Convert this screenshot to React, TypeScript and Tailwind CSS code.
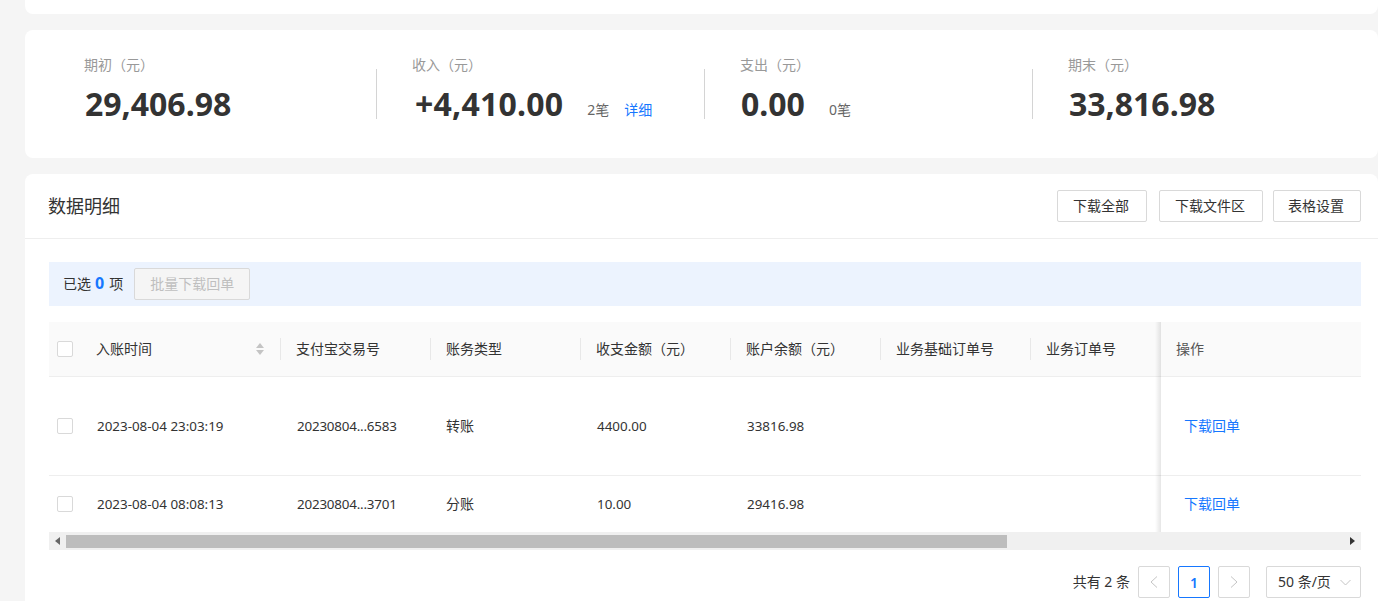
const rows = [
  { time: "2023-08-04 23:03:19", no: "20230804...6583", type: "转账", amount: "4400.00", balance: "33816.98", height: "h-[99px] border-b border-[#eeeeee]" },
  { time: "2023-08-04 08:08:13", no: "20230804...3701", type: "分账", amount: "10.00", balance: "29416.98", height: "h-[56px]" },
];

const columns = ["支付宝交易号", "账务类型", "收支金额（元）", "账户余额（元）", "业务基础订单号", "业务订单号"];

const gridClass = "grid grid-cols-[48px_184px_150px_150px_150px_150px_150px_150px]";

function Checkbox() {
  return (
    <div className="flex h-full items-center pl-2">
      <div className="h-4 w-4 rounded-[2px] border border-[#d9d9d9] bg-white" />
    </div>
  );
}

function Stat({ label, value, count, detail }: { label: string; value: string; count?: string; detail?: boolean }) {
  return (
    <div className="flex w-[328px] shrink-0">
      <div className="mt-[15px] h-[50px] w-px bg-[#d4d4d4]" />
      <div className="pl-9">
        <div className="-ml-px text-[14px] leading-[22px] text-[#999999]">{label}</div>
        <div className="mt-[6px] flex items-baseline">
          <span className={`text-[32px] leading-[44px] font-bold text-[#333333] ${detail ? "ml-[2px] tracking-[0.22px]" : ""}`}>{value}</span>
          {count && <span className="ml-6 -translate-y-px text-[14px] text-[#666666]">{count}</span>}
          {detail && <span className="ml-[15px] -translate-y-px text-[14px] text-[#1677ff]">详细</span>}
        </div>
      </div>
    </div>
  );
}

function OutlineButton({ children, className }: { children: string; className: string }) {
  return (
    <div className={`flex h-8 items-center justify-center rounded-[2px] border border-[#d9d9d9] bg-white pr-[2px] pb-[2px] text-[14px] text-[#333333] ${className}`}>
      {children}
    </div>
  );
}

function PageArrow({ d }: { d: string }) {
  return (
    <div className="flex h-8 w-8 items-center justify-center rounded-[2px] border border-[#d9d9d9]">
      <svg width="8" height="12" viewBox="0 0 8 12" fill="none" stroke="#c4c4c4" strokeWidth="1">
        <path d={d} />
      </svg>
    </div>
  );
}

export default function App() {
  return (
    <div
      className="flex h-[601px] flex-col gap-4 overflow-hidden bg-[#f5f5f5] pl-[25px]"
      style={{ fontFamily: '"Noto Sans", "Noto Sans CJK SC", sans-serif' }}
    >
      <div className="h-[14px] shrink-0 rounded-b-lg bg-white" />

      <div className="flex h-[128px] shrink-0 rounded-lg bg-white pt-6 pl-[23px]">
        <div className="flex">
          <div className="flex w-[328px] shrink-0">
            <div className="w-px" />
            <div className="pl-9">
              <div className="-ml-px text-[14px] leading-[22px] text-[#999999]">期初（元）</div>
              <div className="mt-[6px] text-[32px] leading-[44px] font-bold text-[#333333]">29,406.98</div>
            </div>
          </div>
          <Stat label="收入（元）" value="+4,410.00" count="2笔" detail />
          <Stat label="支出（元）" value="0.00" count="0笔" />
          <Stat label="期末（元）" value="33,816.98" />
        </div>
      </div>

      <div className="flex-1 rounded-t-lg bg-white">
        <div className="flex h-[65px] items-center justify-between border-b border-[#eeeeee] pr-[17px] pl-[23px]">
          <div className="text-[18px] text-[#333333]">数据明细</div>
          <div className="flex">
            <OutlineButton className="w-[90px]">下载全部</OutlineButton>
            <OutlineButton className="ml-3 w-[104px]">下载文件区</OutlineButton>
            <OutlineButton className="ml-[10px] w-[88px]">表格设置</OutlineButton>
          </div>
        </div>

        <div className="pt-[23px] pr-[17px] pl-6">
          <div className="flex h-11 items-center bg-[#ecf3fe] pl-[14px] text-[14px] text-[#333333]">
            <div className="flex items-center pb-[2px]">
              <span>已选</span>
              <span className="mr-[5px] ml-1 text-[16px] font-bold text-[#1677ff]">0</span>
              <span>项</span>
            </div>
            <div className="ml-[11px] flex h-8 w-[116px] items-center justify-center rounded-[2px] border border-[#d9d9d9] bg-[#f5f5f5] pb-[2px] text-[#bfbfbf]">
              批量下载回单
            </div>
          </div>

          <div className="mt-4 flex text-[14px] text-[#333333]">
            <div className="w-[1112px] shrink-0 overflow-hidden">
              <div className={`${gridClass} h-[55px] w-[1232px] border-b border-[#eeeeee] bg-[#fafafa]`}>
                <Checkbox />
                <div className="flex items-center">
                  <div className="flex h-[22px] flex-1 items-center justify-between border-r border-[#e8e8e8] pr-[15px]">
                    <span className="-mt-[2px] -ml-px">入账时间</span>
                    <svg width="10" height="12" viewBox="0 0 10 12" fill="#c4c4c4">
                      <path d="M5 0 9 5H1z" />
                      <path d="M5 12 1 7h8z" />
                    </svg>
                  </div>
                </div>
                {columns.map((c) => (
                  <div key={c} className="flex items-center">
                    <div className="h-[22px] flex-1 border-r border-[#e8e8e8] pl-[15px] leading-[22px]">{c}</div>
                  </div>
                ))}
              </div>
              {rows.map((r) => (
                <div key={r.time} className={`${gridClass} w-[1232px] ${r.height}`}>
                  <Checkbox />
                  <div className="flex items-center text-[13.4px]">{r.time}</div>
                  <div className="flex items-center pl-4 text-[13.4px] tracking-[-0.2px]">{r.no}</div>
                  <div className="flex items-center pb-[2px] pl-[15px]">{r.type}</div>
                  <div className="flex items-center pl-4 text-[13.4px]">{r.amount}</div>
                  <div className="flex items-center pl-4 text-[13.4px]">{r.balance}</div>
                </div>
              ))}
            </div>

            <div className="relative z-10 w-[200px] shrink-0 bg-white">
              <div className="absolute inset-y-0 -left-[6px] w-[6px] bg-gradient-to-l from-black/10 to-transparent" />
              <div className="flex h-[55px] items-center border-b border-[#eeeeee] bg-[#fafafa] pb-[2px] pl-[15px] text-[#555555]">操作</div>
              <div className="flex h-[99px] items-center border-b border-[#eeeeee] pb-[2px] pl-[23px] text-[#1677ff]">下载回单</div>
              <div className="flex h-[56px] items-center pb-[2px] pl-[23px] text-[#1677ff]">下载回单</div>
            </div>
          </div>

          <div className="relative z-20 flex h-[18px] items-center bg-[#f0f0f0]">
            <div className="flex w-[17px] justify-center">
              <svg width="5" height="8" viewBox="0 0 5 8" fill="#666666">
                <path d="M5 0v8L0 4z" />
              </svg>
            </div>
            <div className="h-[13px] w-[941px] bg-[#bdbdbd]" />
            <div className="flex flex-1 justify-end pr-[6px]">
              <svg width="5" height="8" viewBox="0 0 5 8" fill="#333333">
                <path d="M0 0v8l5-4z" />
              </svg>
            </div>
          </div>

          <div className="mt-4 flex h-8 items-center justify-end text-[14px] text-[#333333]">
            <span className="mr-2 pb-[2px]">共有 2 条</span>
            <PageArrow d="M7 .5 1 6l6 5.5" />
            <div className="mx-2 flex h-8 w-8 items-center justify-center rounded-[2px] border border-[#1677ff] font-semibold text-[#1677ff]">1</div>
            <PageArrow d="M1 .5 7 6l-6 5.5" />
            <div className="ml-4 flex h-8 w-[95px] items-center justify-between rounded-[2px] border border-[#d9d9d9] pr-[9px] pl-[11px]">
              <span className="pb-[2px]">50 条/页</span>
              <svg width="11" height="7" viewBox="0 0 11 7" fill="none" stroke="#c4c4c4" strokeWidth="1">
                <path d="M.5 1 5.5 6l5-5" />
              </svg>
            </div>
          </div>
        </div>
      </div>
    </div>
  );
}
